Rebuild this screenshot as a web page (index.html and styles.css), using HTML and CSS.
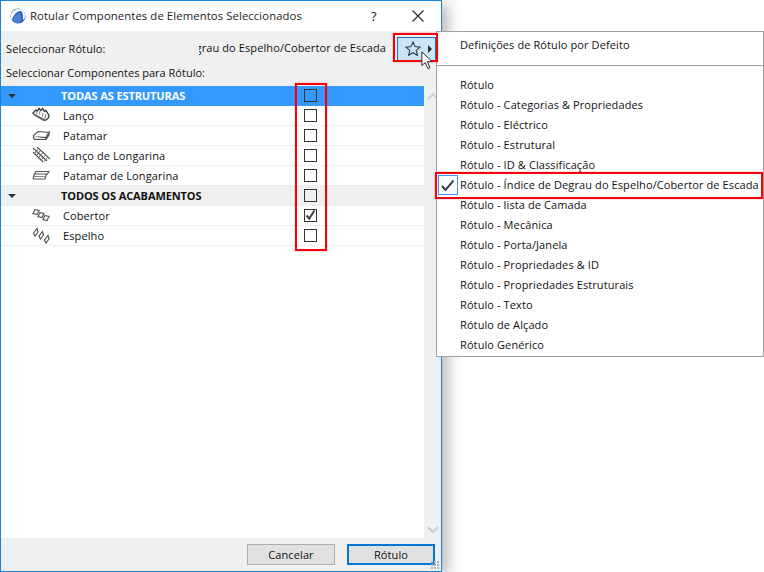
FILE: index.html
```html
<!DOCTYPE html>
<html lang="pt">
<head>
<meta charset="utf-8">
<title>Rotular Componentes</title>
<link rel="stylesheet" href="styles.css">
</head>
<body>
<div class="dialog">
  <header class="titlebar">
    <svg class="appicon" width="16" height="16" viewBox="0 0 16 16"><circle cx="8" cy="8" r="7.5" fill="#2c5fb3"/><path d="M1.500 13 C3.500 6.500 7 3 10.500 3 C12.500 3 13 6 13 12 L14.500 10.500 C15.500 7 15 3.500 12.500 2 C8 -.5 1.500 2 .8 8Z" fill="#fff"/><path d="M2.500 12.500 C4 8 7 5 10 5 C11 5 11.300 8 11.300 13.500 C8 15.500 4.500 15 2.500 12.500Z" fill="#4a7fd0"/></svg>
    <span class="title">Rotular Componentes de Elementos Seleccionados</span>
    <span class="help">?</span>
    <svg class="close" width="12" height="12" viewBox="0 0 12 12"><path d="M.5.5l11 11M11.500.5l-11 11" stroke="#222" stroke-width="1.100" fill="none"/></svg>
  </header>
  <div class="body">
    <div class="selrow">
      <span class="sellabel">Seleccionar Rótulo:</span>
      <span class="selvalue"><span class="selvalue-text">grau do Espelho/Cobertor de Escada</span></span>
      <button class="favbtn">
        <svg width="16" height="15" viewBox="0 0 16 15"><path d="M8 1l2 4.600 5 .5-3.800 3.300 1.200 4.900L8 11.700l-4.400 2.600 1.200-4.900L1 6.100l5-.5z" fill="none" stroke="#2f3842" stroke-width="1.100"/></svg>
        <i class="arrow"></i>
      </button>
    </div>
    <div class="sublabel">Seleccionar Componentes para Rótulo:</div>
    <div class="listarea">
      <div class="list">
        <div class="row group selected"><i class="tri"></i><span class="grouplabel">TODAS AS ESTRUTURAS</span><i class="cb"></i></div>
        <div class="row"><svg class="ric" width="18" height="17" viewBox="0 0 18 17"><path d="M1 6l3-3 1.500 1 1.500-2.500 2 2 1.500-2 2 3 1.500-1 3 5-1 3-3 2-4-2.500-5-2.500-3-2z" fill="#fff" stroke="#444" stroke-width="1.400"/><path d="M2 8l10 6M12 14l1-2.500M5 4l-.5 3M8 4l-.5 3.500M11 6l-.5 3.500M14 7l-1 4.500" fill="none" stroke="#777"/></svg><span class="name">Lanço</span><i class="cb"></i></div>
        <div class="row"><svg class="ric" width="18" height="17" viewBox="0 0 18 17"><path d="M1.500 8.500L6 4.500l11 1-3 5-12-1z" fill="#fff" stroke="#555" stroke-width="1.200"/><path d="M1.500 8.500v2.500l1 1.500h11l.500-2 3-5v2.500l-3 4.500" fill="#e4e4e4" stroke="#555" stroke-width="1.200"/></svg><span class="name">Patamar</span><i class="cb"></i></div>
        <div class="row"><svg class="ric" width="18" height="17" viewBox="0 0 18 17"><path d="M1 1l14 13M5 0l13 12M1 5l10 10" fill="none" stroke="#555" stroke-width="1.200"/><path d="M6 2L3 6M8 4L5 8M10.500 6L7 10M13 8.500L9.500 12.500M15.500 10.500L12 14.500" fill="none" stroke="#666"/></svg><span class="name">Lanço de Longarina</span><i class="cb"></i></div>
        <div class="row"><svg class="ric" width="18" height="17" viewBox="0 0 18 17"><path d="M4 4.500h13l-1.500 2.500H2.500zM1 12h12l1.500-5M1 12l1.500-5" fill="#fff" stroke="#555" stroke-width="1.200"/><path d="M2 9.500h12" stroke="#888"/></svg><span class="name">Patamar de Longarina</span><i class="cb"></i></div>
        <div class="row group shaded"><i class="tri"></i><span class="grouplabel">TODOS OS ACABAMENTOS</span><i class="cb"></i></div>
        <div class="row"><svg class="ric" width="18" height="17" viewBox="0 0 18 17"><path d="M3 2.500l4 1-2 4-4-1zM8 5.500l4 1-2 4-4-1zM13 8.500l4 1-2 4-4-1z" fill="#fff" stroke="#555" stroke-width="1.200"/></svg><span class="name">Cobertor</span><i class="cb on"><svg width="11" height="11" viewBox="0 0 11 11"><path d="M1.500 5.500l2.700 3L9.500.5" fill="none" stroke="#3a4450" stroke-width="2"/></svg></i></div>
        <div class="row"><svg class="ric" width="18" height="17" viewBox="0 0 18 17"><path d="M3 9L1.500 6 5 1.500 6 5zM8.500 12L7 9l3.500-4.500L11.500 8zM14 16l-1.500-3L16 8.500l1 3.500z" fill="#fff" stroke="#555" stroke-width="1.200"/></svg><span class="name">Espelho</span><i class="cb"></i></div>
      </div>
      <div class="scrollbar">
        <svg width="12" height="7" viewBox="0 0 12 7"><path d="M1 6l5-5 5 5" fill="none" stroke="#cfcfcf" stroke-width="2"/></svg>
        <svg width="12" height="7" viewBox="0 0 12 7"><path d="M1 1l5 5 5-5" fill="none" stroke="#cfcfcf" stroke-width="2"/></svg>
      </div>
    </div>
    <footer class="buttons">
      <button class="btn">Cancelar</button>
      <button class="btn primary">Rótulo</button>
    </footer>
    <i class="grip"></i>
  </div>
</div>

<div class="menu">
  <div class="mi first">Definições de Rótulo por Defeito</div>
  <hr class="sep">
  <div class="mi">Rótulo</div>
  <div class="mi">Rótulo - Categorias &amp; Propriedades</div>
  <div class="mi">Rótulo - Eléctrico</div>
  <div class="mi">Rótulo - Estrutural</div>
  <div class="mi">Rótulo - ID &amp; Classificação</div>
  <div class="mi checked"><span class="tick"><svg width="16" height="13" viewBox="0 0 16 13"><path d="M2 7l3.500 4L13.500 1.500" fill="none" stroke="#3a4450" stroke-width="2"/></svg></span>Rótulo - Índice de Degrau do Espelho/Cobertor de Escada</div>
  <div class="mi">Rótulo - lista de Camada</div>
  <div class="mi">Rótulo - Mecânica</div>
  <div class="mi">Rótulo - Porta/Janela</div>
  <div class="mi">Rótulo - Propriedades &amp; ID</div>
  <div class="mi">Rótulo - Propriedades Estruturais</div>
  <div class="mi">Rótulo - Texto</div>
  <div class="mi">Rótulo de Alçado</div>
  <div class="mi">Rótulo Genérico</div>
</div>

<i class="mark mark-fav"></i>
<i class="mark mark-col"></i>
<i class="mark mark-item"></i>
<svg class="cursor" width="12" height="18" viewBox="0 0 14 21"><path d="M1 1v16l4-3.500 3 7 2.500-1-3-7h5.500z" fill="#fff" stroke="#222" stroke-width="1.100"/></svg>
</body>
</html>
```
FILE: styles.css
```css
* { box-sizing: border-box; }
html, body { margin: 0; height: 100%; }
body {
  position: relative;
  width: 764px;
  height: 572px;
  overflow: hidden;
  background: #fff;
  font-family: "Open Sans", "Noto Sans", sans-serif;
  font-size: 11px;
  letter-spacing: .1px;
  color: #111;
}
i { display: block; font-style: normal; }

.dialog {
  position: absolute;
  left: 0;
  top: 0;
  width: 442px;
  height: 572px;
  border: 1px solid #1883d7;
  background: #f0f0f0;
  display: flex;
  flex-direction: column;
  box-shadow: 6px 4px 14px rgba(0,0,0,.28);
}
.titlebar {
  height: 30px;
  flex: none;
  background: #fff;
  display: flex;
  align-items: center;
  padding: 0 0 1px 9px;
  font-size: 11.3px;
}
.appicon { margin-right: 4px; }
.title { flex: 1; white-space: nowrap; color: #222; }
.help { width: 12px; margin-right: 29px; font-size: 13px; color: #222; }
.close { margin-right: 17px; }

.body { flex: 1; display: flex; flex-direction: column; position: relative; min-height: 0; }
.selrow { height: 34px; flex: none; display: flex; align-items: center; padding-left: 5px; }
.sellabel { width: 193px; flex: none; white-space: nowrap; }
.selvalue {
  width: 187px;
  height: 16px;
  flex: none;
  position: relative;
  overflow: hidden;
}
.selvalue-text { position: absolute; right: 0; top: 0; line-height: 16px; white-space: nowrap; }
.favbtn {
  margin-left: 11px;
  margin-top: 1px;
  width: 39px;
  height: 24px;
  padding: 0 3px 0 7px;
  border: 1px solid #1c6eb8;
  background: #cce4f7;
  display: flex;
  align-items: center;
  justify-content: space-between;
  flex: none;
}
.arrow { width: 0; height: 0; border-left: 4px solid #2a3038; border-top: 4px solid transparent; border-bottom: 4px solid transparent; }
.sublabel { height: 21px; flex: none; padding-left: 5px; line-height: 16px; letter-spacing: 0; }

.listarea { flex: 1; min-height: 0; display: flex; }
.list { width: 423px; flex: none; background: #fff; }
.row {
  height: 20px;
  display: flex;
  align-items: center;
  border-bottom: 1px solid #eee;
  position: relative;
}
.group { font-weight: 700; letter-spacing: -.1px; border-bottom-color: transparent; }
.selected { background: #3399ff; color: #fff; }
.shaded { background: #f0f0f0; }
.tri {
  margin-left: 7px;
  width: 0; height: 0;
  border-top: 4px solid #333;
  border-left: 4px solid transparent;
  border-right: 4px solid transparent;
  flex: none;
}
.grouplabel { margin-left: 45px; width: 238px; white-space: nowrap; flex: none; color: inherit; }
.ric { margin-left: 31px; width: 18px; flex: none; }
.name { margin-left: 13px; width: 245px; flex: none; white-space: nowrap; }
.cb {
  position: absolute;
  left: 303px;
  top: 3px;
  width: 13px;
  height: 13px;
  border: 1px solid #333;
  background: transparent;
  display: flex;
  align-items: center;
  justify-content: center;
}
.row:not(.group) .cb { background: #fff; }
.scrollbar {
  width: 17px;
  flex: none;
  display: flex;
  flex-direction: column;
  justify-content: space-between;
  align-items: center;
  padding: 7px 0 5px;
}
.buttons {
  height: 33px;
  flex: none;
  display: flex;
  justify-content: flex-end;
  align-items: flex-start;
  gap: 12px;
  padding: 6px 6px 0 0;
}
.btn {
  width: 88px;
  height: 21px;
  padding: 0;
  font: inherit;
  letter-spacing: inherit;
  color: #111;
  background: #e1e1e1;
  border: 1px solid #adadad;
}
.primary { border: 2px solid #0078d7; }
.grip {
  position: absolute;
  right: 1px;
  bottom: 1px;
  width: 9px;
  height: 9px;
  background-image: radial-gradient(circle at 1px 1px, #b5b5b5 1.100px, transparent 1.200px);
  background-size: 3px 3px;
}

.menu {
  position: absolute;
  left: 436px;
  top: 31px;
  width: 328px;
  height: 326px;
  background: #fff;
  border: 1px solid #a0a0a0;
  padding-top: 3px;
}
.mi { height: 20px; padding-left: 23px; line-height: 20px; white-space: nowrap; position: relative; }
.sep { border: 0; border-top: 1px solid #a0a0a0; margin: 10px 0 9px 0; height: 0; }
.tick {
  position: absolute;
  left: 1px;
  top: 0;
  width: 20px;
  height: 20px;
  border: 1px solid #3399ff;
  background: #fff;
  display: flex;
  align-items: center;
  justify-content: center;
}

.mark { position: absolute; border: 2px solid #f6000c; box-shadow: 0 0 1px rgba(255,0,10,.6); }
.mark-fav { left: 393px; top: 33px; width: 45px; height: 29px; }
.mark-col { left: 295px; top: 83px; width: 32px; height: 168px; }
.mark-item { left: 435px; top: 172px; width: 328px; height: 27px; }
.cursor { position: absolute; left: 421px; top: 51px; }
```
